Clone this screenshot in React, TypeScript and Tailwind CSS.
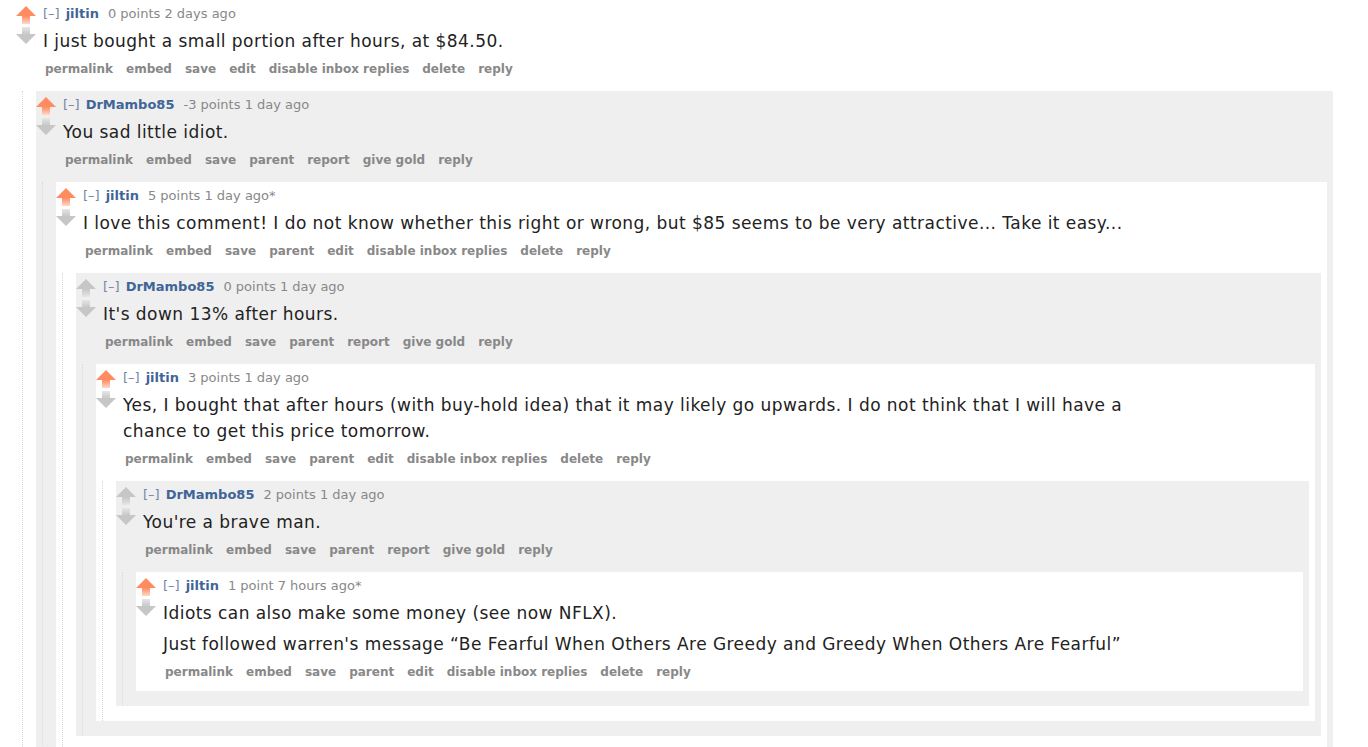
type Comment = {
  author: string;
  score: string;
  time: string;
  edited?: boolean;
  upvoted: boolean;
  body: string[];
  buttons: string[];
  reply?: Comment;
};

const MINE = ["permalink", "embed", "save", "parent", "edit", "disable inbox replies", "delete", "reply"];
const THEIRS = ["permalink", "embed", "save", "parent", "report", "give gold", "reply"];

const thread: Comment = {
  author: "jiltin",
  score: "0 points",
  time: "2 days ago",
  upvoted: true,
  body: ["I just bought a small portion after hours, at $84.50."],
  buttons: MINE.filter((b) => b !== "parent"),
  reply: {
    author: "DrMambo85",
    score: "-3 points",
    time: "1 day ago",
    upvoted: true,
    body: ["You sad little idiot."],
    buttons: THEIRS,
    reply: {
      author: "jiltin",
      score: "5 points",
      time: "1 day ago",
      edited: true,
      upvoted: true,
      body: [
        "I love this comment! I do not know whether this right or wrong, but $85 seems to be very attractive... Take it easy...",
      ],
      buttons: MINE,
      reply: {
        author: "DrMambo85",
        score: "0 points",
        time: "1 day ago",
        upvoted: false,
        body: ["It's down 13% after hours."],
        buttons: THEIRS,
        reply: {
          author: "jiltin",
          score: "3 points",
          time: "1 day ago",
          upvoted: true,
          body: [
            "Yes, I bought that after hours (with buy-hold idea) that it may likely go upwards. I do not think that I will have a chance to get this price tomorrow.",
          ],
          buttons: MINE,
          reply: {
            author: "DrMambo85",
            score: "2 points",
            time: "1 day ago",
            upvoted: false,
            body: ["You're a brave man."],
            buttons: THEIRS,
            reply: {
              author: "jiltin",
              score: "1 point",
              time: "7 hours ago",
              edited: true,
              upvoted: true,
              body: [
                "Idiots can also make some money (see now NFLX).",
                "Just followed warren's message \u201cBe Fearful When Others Are Greedy and Greedy When Others Are Fearful\u201d",
              ],
              buttons: MINE,
            },
          },
        },
      },
    },
  },
};

function UpArrow({ on, id }: { on: boolean; id: string }) {
  const top = on ? "#ff8b60" : "#c6c6c6";
  const bottom = on ? "#ffd9c9" : "#e6e6e6";
  return (
    <svg width="20" height="18" viewBox="0 0 20 18">
      <defs>
        <linearGradient id={id} x1="0" y1="0" x2="0" y2="1">
          <stop offset="0" stopColor={top} />
          <stop offset="0.55" stopColor={top} />
          <stop offset="1" stopColor={bottom} />
        </linearGradient>
      </defs>
      <polygon points="10,0 20,10 14,10 14,18 6,18 6,10 0,10" fill={`url(#${id})`} />
    </svg>
  );
}

function DownArrow({ id }: { id: string }) {
  return (
    <svg width="20" height="17" viewBox="0 0 20 17">
      <defs>
        <linearGradient id={id} x1="0" y1="0" x2="0" y2="1">
          <stop offset="0" stopColor="#e6e6e6" />
          <stop offset="0.45" stopColor="#c6c6c6" />
          <stop offset="1" stopColor="#c6c6c6" />
        </linearGradient>
      </defs>
      <polygon points="6,0 14,0 14,7 20,7 10,17 0,7 6,7" fill={`url(#${id})`} />
    </svg>
  );
}

function CommentBox({ c, depth }: { c: Comment; depth: number }) {
  const bg = depth === 0 ? "" : depth % 2 === 1 ? "bg-[#efefef] mr-[6px] mt-[6px]" : "bg-white mr-[6px] mt-[6px]";
  return (
    <div className={bg}>
      <div className="flex">
        <div className="w-[20px] shrink-0 pt-[6px] flex flex-col gap-[3px]">
          <UpArrow on={c.upvoted} id={`up${depth}`} />
          <DownArrow id={`down${depth}`} />
        </div>
        <div className="ml-[7px] flex-1 pt-[5px] pb-[7px]">
          <div className="text-[13px] leading-[18px] text-[#888]">
            <span className="text-[#6f86a6] mr-[6px]">[–]</span>
            <span className="font-bold text-[#3f6598] mr-[9px]">{c.author}</span>
            <span>{c.score} </span>
            <span>{c.time}</span>
            {c.edited && <span>*</span>}
          </div>
          <div className="mt-[5px] flex flex-col gap-[5px] text-[17px] tracking-[0.45px] leading-[26px] text-[#222] max-w-[1050px]">
            {c.body.map((p, i) => (
              <p key={i}>{p}</p>
            ))}
          </div>
          <ul className="mt-[6px] flex gap-[13px] pl-[2px] text-[12px] leading-[18px] font-bold text-[#888]">
            {c.buttons.map((b) => (
              <li key={b}>{b}</li>
            ))}
          </ul>
        </div>
      </div>
      {c.reply ? (
        <div className="ml-[6px] border-l border-dotted border-[#d8d8e8] pl-[13px] pb-[15px]">
          <CommentBox c={c.reply} depth={depth + 1} />
        </div>
      ) : (
        <div className="h-[3px]" />
      )}
    </div>
  );
}

export default function App() {
  return (
    <div
      className="min-h-screen bg-white pl-[16px] pr-[29px]"
      style={{ fontFamily: '"DejaVu Sans", Verdana, sans-serif' }}
    >
      <CommentBox c={thread} depth={0} />
    </div>
  );
}
